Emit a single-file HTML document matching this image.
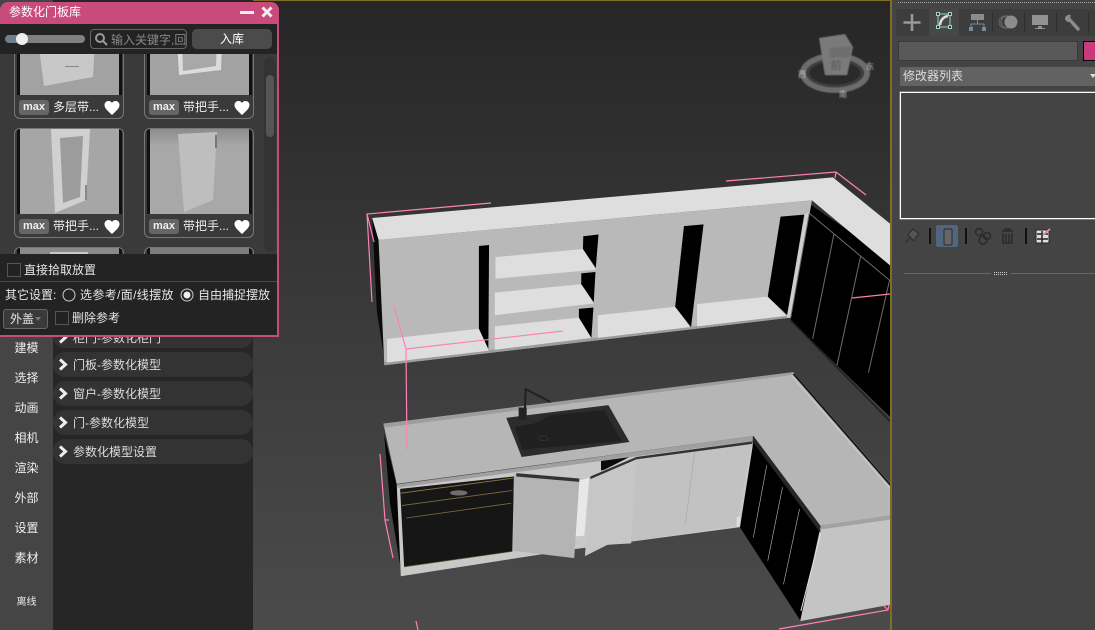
<!DOCTYPE html>
<html lang="zh"><head><meta charset="utf-8"><title>参数化门板库</title>
<style>
html,body{margin:0;padding:0;background:#333}
#r{position:relative;width:1095px;height:630px;overflow:hidden;font-family:"Liberation Sans","Noto Sans CJK SC",sans-serif;font-size:12px;color:#e6e6e6;line-height:14px}
.a{position:absolute;white-space:nowrap}
.side{position:absolute;left:0;width:53px;text-align:center;font-size:12px;color:#eee}
.row{position:absolute;left:53px;width:200px;height:25px;border-radius:12px;background:#333}
.row span{position:absolute;left:20px;top:6px;white-space:nowrap;font-size:12px;color:#ddd}
.row svg{position:absolute;left:5px;top:6px}
.card{position:absolute;width:108px;height:108px;border:1px solid #777;border-radius:6px;box-sizing:content-box;overflow:hidden}
.img{position:absolute;left:2px;top:0;width:99px;height:85px;background:#a4a4a4;border-left:3px solid #111;border-right:3px solid #111}
.img svg{display:block}
.tag{position:absolute;left:4px;top:90px;width:30px;height:15px;border-radius:3px;background:#666;color:#eee;text-align:center;font-size:11px;font-weight:bold;line-height:14px}
.nm{position:absolute;left:38px;top:90px;font-size:12px;color:#eee;white-space:nowrap}
.heart{position:absolute;left:89px;top:90px}
.cb{position:absolute;width:12px;height:12px;border:1px solid #555;background:#222}
</style></head><body><div id="r">

<svg class="a" style="left:0;top:0" width="1095" height="630" viewBox="0 0 1095 630">
<defs><linearGradient id="bg" x1="0" y1="0" x2="0" y2="1"><stop offset="0" stop-color="#262626"/><stop offset=".5" stop-color="#3a3a3a"/><stop offset="1" stop-color="#4b4b4b"/></linearGradient>
<filter id="b" x="-10%" y="-10%" width="120%" height="120%"><feGaussianBlur stdDeviation=".5"/></filter></defs>
<rect x="253" y="0" width="640" height="630" fill="url(#bg)"/>
<rect x="253" y="0" width="640" height="1" fill="#7d6f28"/>

<!-- view cube -->
<g filter="url(#b)">
<ellipse cx="835" cy="73" rx="32" ry="17" fill="#2a2a2a" stroke="#6c6c6c" stroke-width="6"/>
<ellipse cx="835" cy="73" rx="27" ry="13" fill="none" stroke="#3e3e3e" stroke-width="3"/>
<polygon points="819,38 845,34 853,47 847,75 825,75" fill="#7a7a7a"/>
<polygon points="829,48 851,46 850,57 830,58" fill="#6e6e6e"/>
<text x="836" y="69" font-size="11" fill="#555" text-anchor="middle" font-family="Noto Sans CJK SC">前</text>
<text x="798" y="77" font-size="8" fill="#bbb" font-family="Noto Sans CJK SC">西</text>
<text x="866" y="69" font-size="8" fill="#bbb" font-family="Noto Sans CJK SC">东</text>
<text x="839" y="97" font-size="8" fill="#bbb" font-family="Noto Sans CJK SC">南</text>
</g>

<!-- lower cabinets, zoom5 coordinates -->
<g transform="translate(370,370) scale(.3348)">
<polygon points="42,190 80,345 92,595 60,400" fill="#060606"/>
<polygon points="80,345 1143,205 1140,465 612,535 92,616" fill="#c8c8c8"/>
<polygon points="690,268 775,260 700,298 690,300" fill="#0a0a0a"/>
<polygon points="90,355 430,318 425,542 102,588" fill="#161616"/>
<polyline points="92,368 428,323" stroke="#8f7a42" stroke-width="2.500" fill="none"/>
<polyline points="95,405 425,360" stroke="#7d6c3c" stroke-width="2.500" fill="none"/>
<polyline points="108,442 422,398" stroke="#7d6c3c" stroke-width="2.500" fill="none"/>
<polyline points="102,588 425,542" stroke="#6d6034" stroke-width="2" fill="none"/>
<ellipse cx="265" cy="367" rx="26" ry="8" fill="#6e6e6e"/>
<polygon points="625,330 655,322 640,495 614,497" fill="#e8e8e8"/>
<polygon points="430,312 625,330 610,562 427,540" fill="#b4b4b4"/>
<polygon points="437,308 625,324 625,334 437,318" fill="#333"/>
<polygon points="795,265 1140,222 1095,465 710,522" fill="#c2c2c2"/>
<polygon points="658,322 795,265 780,518 710,522 642,556" fill="#c6c6c6"/>
<polygon points="658,318 795,260 1143,213 1140,221 795,267 658,326" fill="#333"/>
<line x1="970" y1="245" x2="942" y2="458" stroke="#a8a8a8" stroke-width="2"/>
<polygon points="1095,440 1106,436 1106,466 1095,468" fill="#ddd"/>
<polygon points="1145,215 1345,480 1285,748 1105,470" fill="#000"/>
<polyline points="1185,285 1145,500" stroke="#aaa" stroke-width="2"/>
<polyline points="1232,350 1188,570" stroke="#aaa" stroke-width="2"/>
<polyline points="1283,415 1235,640" stroke="#aaa" stroke-width="2"/>
<polygon points="1345,470 1560,440 1560,700 1285,750" fill="#c4c4c4"/>
<polyline points="1346,488 1287,720" stroke="#e2e2e2" stroke-width="3"/>
<!-- countertop -->
<polygon points="40,160 1265,8 1560,345 1560,435 1345,465 1145,197 80,340" fill="#b6b6b6"/>
<polygon points="40,160 1265,6 1268,14 42,172" fill="#9d9d9d"/>
<polygon points="80,342 1143,197 1143,212 82,352" fill="#a0a0a0"/>
<polygon points="1345,465 1560,433 1560,446 1348,476" fill="#a2a2a2"/>
<polygon points="1145,197 1345,465 1345,486 1143,214" fill="#262626"/>
<polyline points="1265,12 1560,350" stroke="#111" stroke-width="5" fill="none"/>
<polyline points="1258,16 1560,362" stroke="#d4d4d4" stroke-width="2" fill="none"/>
<!-- sink -->
<polygon points="407,143 712,105 775,215 453,260" fill="#2c2c2c"/>
<polygon points="432,170 490,160 540,135 700,120 752,212 455,238" fill="#202020"/>
<ellipse cx="518" cy="204" rx="14" ry="7" fill="none" stroke="#3a3a3a" stroke-width="2"/>
<polyline points="462,135 465,57 540,96" fill="none" stroke="#202020" stroke-width="6"/>
<rect x="444" y="112" width="24" height="36" fill="#222"/>
</g>

<!-- upper cabinets, zoom4 coordinates -->
<g transform="translate(360,170) scale(.3378)">
<polygon points="1330,100 1620,300 1620,780 1275,445" fill="#000"/>
<polyline points="1275,445 1600,775" stroke="#222" stroke-width="5" fill="none"/>
<polygon points="36,142 55,207 75,578 50,420" fill="#0b0b0b"/>
<polygon points="55,207 1338,90 1275,437 72,578" fill="#b9b9b9"/>
<polygon points="72,578 1275,437 1272,430 74,568" fill="#9c9c9c"/>
<polygon points="80,500 352,470 380,505 380,535 80,570" fill="#dedede"/>
<polygon points="352,225 382,222 380,530 352,470" fill="#000"/>
<polygon points="399,463 648,437 685,497 399,532" fill="#dedede"/>
<polygon points="648,411 691,407 685,497 648,437" fill="#000"/>
<polygon points="399,363 655,338 692,395 399,430" fill="#dedede"/>
<polygon points="655,306 697,302 692,392 655,338" fill="#000"/>
<polygon points="401,258 660,234 698,295 401,322" fill="#dedede"/>
<polygon points="661,196 706,191 698,290 660,234" fill="#000"/>
<polygon points="704,430 933,405 977,465 704,497" fill="#dedede"/>
<polygon points="959,166 1017,161 980,465 933,405" fill="#000"/>
<polygon points="998,397 1207,375 1262,432 998,463" fill="#dedede"/>
<polygon points="1245,138 1315,132 1265,430 1207,375" fill="#000"/>
<polygon points="1318,130 1330,125 1275,437 1263,437" fill="#cfcfcf"/>
<polygon points="36,142 1400,22 1620,200 1620,325 1338,90 55,207" fill="#dedede"/>
<g stroke="#6c6c6c" stroke-width="3" fill="none">
<polyline points="1330,128 1620,370"/>
<polyline points="1330,128 1275,437"/>
<polyline points="1403,190 1340,500"/>
<polyline points="1482,255 1412,578"/>
<polyline points="1568,325 1505,600"/>
</g>
</g>

<!-- pink selection brackets -->
<g stroke="#ff80b8" stroke-width="1.200" fill="none">
<polyline points="491,203 367,214 372,302"/>
<polyline points="367,214 374,242"/>
<polyline points="726,181 836,172 866,195"/>
<polyline points="836,172 835,178"/>
<polyline points="394,306 406,349 407,450"/>
<polyline points="406,349 563,331"/>
<polyline points="852,298 890,294"/>
<polyline points="380,454 385,520 393,558"/>
<polyline points="385,520 389,520"/>
<polyline points="779,629 888,610 889,605"/>
<polyline points="416,621 418,630"/>
<polyline points="884,606 888,610"/>
</g>
</svg>

<!-- left strip -->
<div class="a" style="left:0;top:0;width:53px;height:630px;background:#454545"></div>
<div class="a" style="left:53px;top:0;width:200px;height:630px;background:#262626"></div>
<div class="side" style="top:341px">建模</div>
<div class="side" style="top:371px">选择</div>
<div class="side" style="top:401px">动画</div>
<div class="side" style="top:431px">相机</div>
<div class="side" style="top:461px">渲染</div>
<div class="side" style="top:491px">外部</div>
<div class="side" style="top:521px">设置</div>
<div class="side" style="top:551px">素材</div>
<div class="side" style="top:596px;font-size:10px">离线</div>

<div class="row" style="top:323px"><span style="top:8px">柜门-参数化柜门</span><svg width="11" height="13" style="top:8px"><path d="M2 1.500 7.500 6.500 2 11.500" fill="none" stroke="#eee" stroke-width="3"/></svg></div>
<div class="row" style="top:352px"><svg width="11" height="13"><path d="M2 1.500 7.500 6.500 2 11.500" fill="none" stroke="#eee" stroke-width="3"/></svg><span>门板-参数化模型</span></div>
<div class="row" style="top:381px"><svg width="11" height="13"><path d="M2 1.500 7.500 6.500 2 11.500" fill="none" stroke="#eee" stroke-width="3"/></svg><span>窗户-参数化模型</span></div>
<div class="row" style="top:410px"><svg width="11" height="13"><path d="M2 1.500 7.500 6.500 2 11.500" fill="none" stroke="#eee" stroke-width="3"/></svg><span>门-参数化模型</span></div>
<div class="row" style="top:439px"><svg width="11" height="13"><path d="M2 1.500 7.500 6.500 2 11.500" fill="none" stroke="#eee" stroke-width="3"/></svg><span>参数化模型设置</span></div>

<!-- dialog -->
<div class="a" style="left:0;top:2px;width:279px;height:335px;background:#c94b7c;border-radius:8px 8px 0 0"></div>
<div class="a" style="left:0;top:24px;width:277px;height:311px;background:#3a3a3a;overflow:hidden">
  <div class="card" style="left:14px;top:-15px"><div class="img"><svg width="99" height="85"><rect width="99" height="85" fill="#a2a2a2"/><polygon points="18,30 75,30 73,67 24,76" fill="#c8c8c8"/><rect x="45" y="56" width="14" height="1" fill="#888"/></svg></div><div class="tag">max</div><div class="nm">多层带...</div><svg class="heart" width="16" height="16" viewBox="0 0 16 16"><path d="M8 15C4 11 .5 8.500.5 5 .5 2.500 2.500 1 4.500 1 6 1 7.300 1.800 8 3 8.700 1.800 10 1 11.500 1 13.500 1 15.500 2.500 15.500 5 15.500 8.500 12 11 8 15Z" fill="#fff"/></svg></div>
  <div class="card" style="left:144px;top:-15px"><div class="img"><svg width="99" height="85"><rect width="99" height="85" fill="#a2a2a2"/><polygon points="27,30 72,30 71,60 29,65" fill="#dcdcdc"/><polygon points="32,30 67,30 66,56 33,61" fill="#a8a8a8"/></svg></div><div class="tag">max</div><div class="nm">带把手...</div><svg class="heart" width="16" height="16" viewBox="0 0 16 16"><path d="M8 15C4 11 .5 8.500.5 5 .5 2.500 2.500 1 4.500 1 6 1 7.300 1.800 8 3 8.700 1.800 10 1 11.500 1 13.500 1 15.500 2.500 15.500 5 15.500 8.500 12 11 8 15Z" fill="#fff"/></svg></div>
  <div class="card" style="left:14px;top:104px"><div class="img"><svg width="99" height="85"><rect width="99" height="85" fill="#a6a6a6"/><polygon points="31,0 70,0 66,71 35,84" fill="#d0d0d0"/><polygon points="40,9 63,7 60,68 43,74" fill="#9c9c9c"/><rect x="65" y="56" width="2" height="15" fill="#888"/></svg></div><div class="tag">max</div><div class="nm">带把手...</div><svg class="heart" width="16" height="16" viewBox="0 0 16 16"><path d="M8 15C4 11 .5 8.500.5 5 .5 2.500 2.500 1 4.500 1 6 1 7.300 1.800 8 3 8.700 1.800 10 1 11.500 1 13.500 1 15.500 2.500 15.500 5 15.500 8.500 12 11 8 15Z" fill="#fff"/></svg></div>
  <div class="card" style="left:144px;top:104px"><div class="img"><svg width="99" height="85"><defs><linearGradient id="g2" x1="0" y1="0" x2="0" y2="1"><stop offset="0" stop-color="#8c8c8c"/><stop offset=".2" stop-color="#a8a8a8"/><stop offset="1" stop-color="#a8a8a8"/></linearGradient></defs><rect width="99" height="85" fill="url(#g2)"/><polygon points="28,5 67,3 63,71 34,83" fill="#bebebe"/><rect x="65" y="6" width="2" height="13" fill="#777"/></svg></div><div class="tag">max</div><div class="nm">带把手...</div><svg class="heart" width="16" height="16" viewBox="0 0 16 16"><path d="M8 15C4 11 .5 8.500.5 5 .5 2.500 2.500 1 4.500 1 6 1 7.300 1.800 8 3 8.700 1.800 10 1 11.500 1 13.500 1 15.500 2.500 15.500 5 15.500 8.500 12 11 8 15Z" fill="#fff"/></svg></div>
  <div class="card" style="left:14px;top:223px"><div class="img" style="background:#8a8a8a"><svg width="99" height="85"><rect x="30" y="4" width="38" height="12" fill="#c8c8c8"/></svg></div></div>
  <div class="card" style="left:144px;top:223px"><div class="img" style="background:#7c7c7c"></div></div>
  <div class="a" style="left:264px;top:33px;width:12px;height:195px;background:#333;border-radius:6px"></div>
  <div class="a" style="left:266px;top:51px;width:8px;height:62px;background:#555;border-radius:4px"></div>
</div>
<div class="a" style="left:9px;top:5px;font-size:12px;color:#fff">参数化门板库</div>
<div class="a" style="left:240px;top:11px;width:14px;height:3px;background:#eee"></div>
<svg class="a" style="left:261px;top:6px" width="12" height="12"><path d="M1.500 1.500 10.500 10.500M10.500 1.500 1.500 10.500" stroke="#eee" stroke-width="3"/></svg>

<div class="a" style="left:0;top:24px;width:277px;height:30px;background:#232323"></div>
<div class="a" style="left:5px;top:35px;width:80px;height:8px;border-radius:4px;background:linear-gradient(90deg,#6d8090 0 20%,#808080 20%)"></div>
<div class="a" style="left:16px;top:33px;width:12px;height:12px;border-radius:50%;background:#eee"></div>
<div class="a" style="left:90px;top:29px;width:95px;height:18px;border:1px solid #666;border-radius:4px;overflow:hidden;color:#888;line-height:18px"><span style="position:absolute;left:20px;top:1px;white-space:nowrap">输入关键字,回</span></div>
<svg class="a" style="left:94px;top:32px" width="14" height="14"><circle cx="6" cy="6" r="4" fill="none" stroke="#999" stroke-width="2"/><path d="M9 9 13 13" stroke="#999" stroke-width="2"/></svg>
<div class="a" style="left:192px;top:29px;width:80px;height:20px;background:#4b4b4b;border-radius:5px;text-align:center;line-height:20px;color:#fff">入库</div>

<div class="a" style="left:0;top:254px;width:277px;height:81px;background:#232323"></div>
<div class="a" style="left:0;top:281px;width:277px;height:1px;background:#4a4a4a"></div>
<div class="cb" style="left:7px;top:263px"></div>
<div class="a" style="left:24px;top:263px">直接拾取放置</div>
<div class="a" style="left:5px;top:288px">其它设置:</div>
<svg class="a" style="left:62px;top:288px" width="14" height="14"><circle cx="7" cy="7" r="6" fill="none" stroke="#ccc"/></svg>
<div class="a" style="left:80px;top:288px;letter-spacing:.35px">选参考/面/线摆放</div>
<svg class="a" style="left:180px;top:288px" width="14" height="14"><circle cx="7" cy="7" r="6" fill="none" stroke="#ccc"/><circle cx="7" cy="7" r="3.500" fill="#eee"/></svg>
<div class="a" style="left:198px;top:288px">自由捕捉摆放</div>
<div class="a" style="left:3px;top:309px;height:18px;border:1px solid #666;border-radius:3px;background:#3a3a3a;line-height:19px;padding-left:6px;width:37px">外盖</div>
<div class="a" style="left:35px;top:317px;width:0;height:0;border:3px solid transparent;border-top:4px solid #777"></div>
<div class="cb" style="left:55px;top:311px"></div>
<div class="a" style="left:72px;top:311px">删除参考</div>

<!-- right panel -->
<div class="a" style="left:890px;top:0;width:2px;height:630px;background:#7d6f28"></div>
<div class="a" style="left:892px;top:0;width:203px;height:630px;background:#444"></div>
<div class="a" style="left:898px;top:2px;width:197px;height:0;border-top:1px dotted #aaa"></div>
<div class="a" style="left:896px;top:9px;width:199px;height:27px;background:#3d3d3d"></div>
<div class="a" style="left:929px;top:9px;width:30px;height:27px;background:#474747"></div>
<svg class="a" style="left:896px;top:9px" width="199" height="27">
 <path d="M16 5V22M7.500 13.500H24.500" stroke="#999" stroke-width="2.500" fill="none"/>
 <rect x="42" y="5" width="12" height="13" fill="none" stroke="#9fd0cc" stroke-width="1"/>
 <g fill="#333" stroke="#9fd0cc"><rect x="40.500" y="3.500" width="3" height="3"/><rect x="52.500" y="3.500" width="3" height="3"/><rect x="40.500" y="16.500" width="3" height="3"/><rect x="52.500" y="16.500" width="3" height="3"/></g>
 <path d="M44 16C44.500 11 47.500 8 52 7" fill="none" stroke="#ddd" stroke-width="2.500"/>
 <rect x="75" y="5" width="13" height="6" fill="#8c8c8c"/>
 <path d="M81.500 11V15M75 19V15H88V19" fill="none" stroke="#7a8a96" stroke-width="1"/>
 <rect x="73" y="18" width="4" height="4" fill="#7a8a96"/><rect x="86" y="18" width="4" height="4" fill="#7a8a96"/>
 <line x1="96.500" y1="3" x2="96.500" y2="24" stroke="#2e2e2e"/>
 <circle cx="109" cy="13" r="6" fill="none" stroke="#666"/><circle cx="111" cy="13" r="6" fill="none" stroke="#707070"/>
 <circle cx="115" cy="13" r="6.500" fill="#8c8c8c"/>
 <line x1="128.500" y1="3" x2="128.500" y2="24" stroke="#2e2e2e"/>
 <rect x="136" y="6" width="16" height="10" fill="#929292"/><rect x="142" y="17" width="4" height="2" fill="#929292"/><rect x="139" y="19" width="10" height="1" fill="#929292"/>
 <line x1="160.500" y1="3" x2="160.500" y2="24" stroke="#2e2e2e"/>
 <path d="M173 10 182 20" stroke="#8c8c8c" stroke-width="3.500" stroke-linecap="round"/><path d="M175 6C172 5 169 7 169 10 170 13 173 14 176 12L174 9Z" fill="#8c8c8c"/>
 <line x1="192.500" y1="3" x2="192.500" y2="24" stroke="#2e2e2e"/>
</svg>

<div class="a" style="left:898px;top:41px;width:180px;height:20px;background:#595959;border:1px solid #3a3a3a;box-sizing:border-box"></div>
<div class="a" style="left:1083px;top:41px;width:14px;height:20px;background:#c93a7c;border:1px solid #000;box-sizing:border-box"></div>
<div class="a" style="left:900px;top:67px;width:195px;height:19px;background:#626262"></div>
<div class="a" style="left:903px;top:69px;color:#ddd">修改器列表</div>
<div class="a" style="left:1090px;top:74px;width:0;height:0;border:3px solid transparent;border-top:4px solid #ddd"></div>
<div class="a" style="left:900px;top:92px;width:200px;height:127px;background:#444;border:1px solid #fff;box-sizing:border-box;box-shadow:0 0 0 .5px #aaa"></div>

<svg class="a" style="left:900px;top:224px" width="195" height="26">
 <path d="M5 19 10 14" stroke="#333" stroke-width="1.500"/><path d="M8 11 14 17 16 13 19 10 13 5 10 8Z" fill="#555" stroke="#2a2a2a"/>
 <rect x="29" y="4" width="2" height="16" fill="#111"/>
 <rect x="36" y="1" width="22" height="22" rx="2" fill="#50667f"/>
 <rect x="44" y="5" width="8" height="16" rx="1" fill="#666" stroke="#2a2a2a"/>
 <rect x="65" y="4" width="2" height="16" fill="#111"/>
 <g fill="none" stroke="#2a2a2a" stroke-width="1.500"><circle cx="79" cy="8" r="3.500"/><circle cx="87" cy="12" r="3.500"/><circle cx="83" cy="16" r="4"/></g>
 <path d="M102 7H113M105 7V5H110V7M103 9V19H112V9M106 10V18M109 10V18" fill="none" stroke="#2a2a2a" stroke-width="1.500"/>
 <rect x="125" y="4" width="2" height="16" fill="#111"/>
 <rect x="136" y="6" width="13" height="13" fill="#ddd" stroke="#222"/>
 <path d="M137 10H148M137 15H148M142 7V19" stroke="#222" stroke-width="1.500"/>
 <path d="M143 11 150 5" stroke="#e58aa5" stroke-width="2"/>
</svg>
<div class="a" style="left:904px;top:273px;width:87px;height:1px;background:#666"></div>
<div class="a" style="left:994px;top:272px;width:13px;height:0;border-top:1px dotted #ccc"></div>
<div class="a" style="left:994px;top:274px;width:13px;height:0;border-top:1px dotted #ccc"></div>
<div class="a" style="left:1011px;top:273px;width:84px;height:1px;background:#666"></div>

</div></body></html>
